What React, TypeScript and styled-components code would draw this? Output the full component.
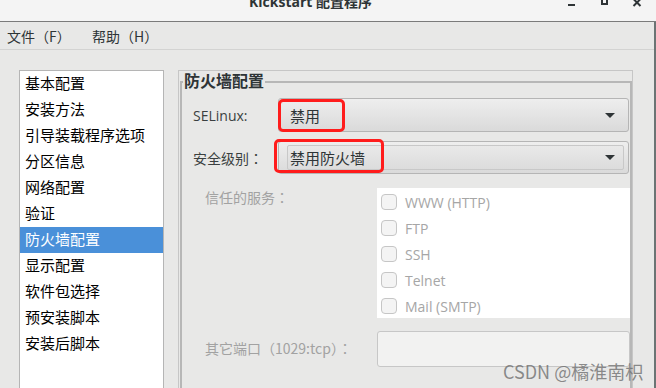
import styled, { createGlobalStyle } from 'styled-components';

const GlobalStyle = createGlobalStyle`
  html, body {
    margin: 0;
    padding: 0;
    overflow: hidden;
    background: #e8e8e7;
  }
  body {
    font-family: "Open Sans", "Noto Sans CJK SC", sans-serif;
  }
`;

const sections = [
  '基本配置',
  '安装方法',
  '引导装载程序选项',
  '分区信息',
  '网络配置',
  '验证',
  '防火墙配置',
  '显示配置',
  '软件包选择',
  '预安装脚本',
  '安装后脚本',
];

const services = ['WWW (HTTP)', 'FTP', 'SSH', 'Telnet', 'Mail (SMTP)'];

export default function App() {
  return (
    <Window>
      <GlobalStyle />
      <TitleBar>
        <Title>Kickstart 配置程序</Title>
        <Controls>
          <ControlButton>
            <svg width='20' height='10' viewBox='0 0 20 10'>
              <rect x='7' y='4' width='7' height='2' fill='#2e3436' />
            </svg>
          </ControlButton>
          <ControlButton>
            <svg width='20' height='10' viewBox='0 0 20 10'>
              <rect x='8' y='-1' width='5' height='5' fill='none' stroke='#2e3436' strokeWidth='2' />
            </svg>
          </ControlButton>
          <ControlButton>
            <svg width='20' height='10' viewBox='0 0 20 10'>
              <path d='M6.5 -1 L13.5 6 M13.5 -1 L6.5 6' stroke='#2e3436' strokeWidth='2' />
            </svg>
          </ControlButton>
        </Controls>
      </TitleBar>

      <Body>
        <MenuBar>
          <MenuItem>文件（F）</MenuItem>
          <MenuItem>帮助（H）</MenuItem>
        </MenuBar>

        <Content>
          <Sidebar>
            {sections.map((name) => (
              <SidebarItem key={name} $selected={name === '防火墙配置'}>
                {name}
              </SidebarItem>
            ))}
          </Sidebar>

          <Panel>
            <Frame>
              <FrameTitle>防火墙配置</FrameTitle>

              <Row $top={0}>
                <Label $width={85}>SELinux:</Label>
                <Combo $height={34}>
                  <ComboText>禁用</ComboText>
                  <Arrow $right={13} />
                  <Highlight $x={-1} $y={0} $w={67} $h={33} />
                </Combo>
              </Row>

              <Row $top={9}>
                <Label $width={85}>
                  安全级别<Colon>：</Colon>
                </Label>
                <Combo $height={33}>
                  <ComboInner>
                    <ComboText $inner>禁用防火墙</ComboText>
                    <Arrow $right={8} />
                  </ComboInner>
                  <Highlight $x={-5} $y={-3} $w={110} $h={34} />
                </Combo>
              </Row>

              <Row $top={14} $alignTop>
                <DimLabel>
                  信任的服务<Colon>：</Colon>
                </DimLabel>
                <ServiceList>
                  {services.map((s) => (
                    <ServiceRow key={s}>
                      <CheckBox />
                      <ServiceName>{s}</ServiceName>
                    </ServiceRow>
                  ))}
                </ServiceList>
              </Row>

              <Row $top={13}>
                <DimLabel $lift>
                  其它端口<Colon>（</Colon>1029:tcp<Colon>）</Colon>
                  <Colon>：</Colon>
                </DimLabel>
                <PortEntry />
              </Row>
            </Frame>
          </Panel>
        </Content>
      </Body>

      <Watermark>CSDN @橘淮南枳</Watermark>
    </Window>
  );
}

const Window = styled.div`
  position: relative;
  width: 656px;
  height: 388px;
  overflow: hidden;
  display: flex;
  flex-direction: column;
  background: #e8e8e7;
`;

const TitleBar = styled.div`
  height: 21px;
  flex-shrink: 0;
  display: flex;
  align-items: flex-start;
  background: #f4f4f4;
  border-bottom: 1px solid #7b7b7b;
  overflow: hidden;
`;

const Title = styled.div`
  flex: 1;
  padding-left: 60px;
  margin-top: -6px;
  text-align: center;
  font-size: 14px;
  line-height: 16px;
  font-weight: bold;
  color: #2e3436;
`;

const Controls = styled.div`
  display: flex;
  gap: 13px;
  padding-right: 9px;
`;

const ControlButton = styled.div`
  width: 20px;
  height: 10px;
  display: flex;

  svg {
    display: block;
  }
`;

const Body = styled.div`
  flex: 1;
  min-height: 0;
  display: flex;
  flex-direction: column;
  border-right: 2px solid #6b7474;
`;

const MenuBar = styled.div`
  height: 27px;
  flex-shrink: 0;
  display: grid;
  grid-template-columns: 85px auto;
  align-items: center;
  padding-left: 7px;
  border-bottom: 1px solid #d3d3d2;
  font-family: "Noto Sans CJK SC", sans-serif;
  font-size: 14px;
  color: #2e3436;
`;

const MenuItem = styled.span`
  line-height: 18px;
  white-space: nowrap;
`;

const Content = styled.div`
  flex: 1;
  min-height: 0;
  display: flex;
  gap: 14px;
  padding: 20px 21px 0 19px;
`;

const Sidebar = styled.div`
  width: 143px;
  flex-shrink: 0;
  background: #fff;
  border: 1px solid #b5b5b5;
  border-bottom: none;
`;

const SidebarItem = styled.div<{ $selected?: boolean }>`
  height: 26px;
  line-height: 24px;
  padding-left: 5px;
  font-family: "Noto Sans CJK SC", sans-serif;
  font-size: 15px;
  color: ${(p) => (p.$selected ? '#fff' : '#000')};
  background: ${(p) => (p.$selected ? '#4a90d9' : 'transparent')};
  white-space: nowrap;
`;

const Panel = styled.div`
  flex: 1;
  display: flex;
  flex-direction: column;
  border: 1px solid #c6c6c6;
  border-bottom: none;
`;

const Frame = styled.fieldset`
  flex: 1;
  min-width: 0;
  margin: 0 0 0 1px;
  padding: 5px 0 0 11px;
  border: 2px solid #b7b7b7;
  border-bottom: none;
`;

const FrameTitle = styled.legend`
  margin-left: -10px;
  padding: 0 1px 4px;
  font-family: "Noto Sans CJK SC", sans-serif;
  font-size: 16px;
  line-height: 18px;
  font-weight: bold;
  color: #2e3436;
`;

const Row = styled.div<{ $top: number; $alignTop?: boolean }>`
  display: flex;
  align-items: ${(p) => (p.$alignTop ? 'flex-start' : 'center')};
  margin-top: ${(p) => p.$top}px;
`;

const Label = styled.div<{ $width: number }>`
  width: ${(p) => p.$width}px;
  flex-shrink: 0;
  font-family: "Open Sans", "Noto Sans CJK SC", sans-serif;
  font-size: 14px;
  color: #3a3f40;
  white-space: nowrap;
`;

const Colon = styled.span`
  font-family: "Noto Sans CJK TC", sans-serif;
`;

const DimLabel = styled.div<{ $lift?: boolean }>`
  width: 172px;
  flex-shrink: 0;
  padding-left: 12px;
  padding-bottom: ${(p) => (p.$lift ? 3 : 0)}px;
  font-family: "Noto Sans CJK SC", sans-serif;
  font-size: 14px;
  line-height: 18px;
  color: #a2a2a2;
  white-space: nowrap;
`;

const Combo = styled.div<{ $height: number }>`
  position: relative;
  flex: 1;
  height: ${(p) => p.$height}px;
  box-sizing: border-box;
  margin-right: 1px;
  display: flex;
  align-items: center;
  border: 1px solid #b5b5b5;
  border-radius: 3px;
  background: linear-gradient(#eeeeee, #dadada);
`;

const ComboInner = styled.div`
  flex: 1;
  align-self: stretch;
  margin: 3px 4px 3px 8px;
  display: flex;
  align-items: center;
  border: 1px solid #c8c8c8;
  border-radius: 2px;
  background: linear-gradient(#e9e9e9, #dcdcdc);
`;

const ComboText = styled.span<{ $inner?: boolean }>`
  flex: 1;
  padding-left: ${(p) => (p.$inner ? 2 : 11)}px;
  font-family: "Noto Sans CJK SC", sans-serif;
  font-size: 15px;
  color: #2e3436;
`;

const Arrow = styled.span<{ $right: number }>`
  width: 0;
  height: 0;
  margin-right: ${(p) => p.$right}px;
  border-left: 5px solid transparent;
  border-right: 5px solid transparent;
  border-top: 5px solid #2e3436;
`;

const Highlight = styled.div<{ $x: number; $y: number; $w: number; $h: number }>`
  position: absolute;
  left: ${(p) => p.$x}px;
  top: ${(p) => p.$y}px;
  width: ${(p) => p.$w}px;
  height: ${(p) => p.$h}px;
  box-sizing: border-box;
  border: 3px solid #ff1c1c;
  border-radius: 5px;
  pointer-events: none;
`;

const ServiceList = styled.div`
  flex: 1;
  height: 130px;
  box-sizing: border-box;
  padding: 1px 0 0 4px;
  background: #fff;
  overflow: hidden;
`;

const ServiceRow = styled.div`
  height: 26px;
  display: flex;
  align-items: center;
  gap: 8px;
`;

const CheckBox = styled.span`
  width: 16px;
  height: 16px;
  box-sizing: border-box;
  border: 1px solid #c6c6c6;
  border-radius: 4px;
  background: #f4f4f4;
`;

const ServiceName = styled.span`
  font-family: "Open Sans", sans-serif;
  font-size: 14px;
  color: #a6a6a6;
`;

const PortEntry = styled.div`
  flex: 1;
  height: 36px;
  box-sizing: border-box;
  border: 1px solid #c7c7c7;
  border-radius: 3px;
  background: #f2f2f1;
`;

const Watermark = styled.div`
  position: absolute;
  left: 503px;
  top: 359px;
  font-family: "Noto Sans CJK SC", sans-serif;
  font-size: 18px;
  line-height: 24px;
  color: rgba(105, 105, 105, 0.75);
  white-space: nowrap;
`;
